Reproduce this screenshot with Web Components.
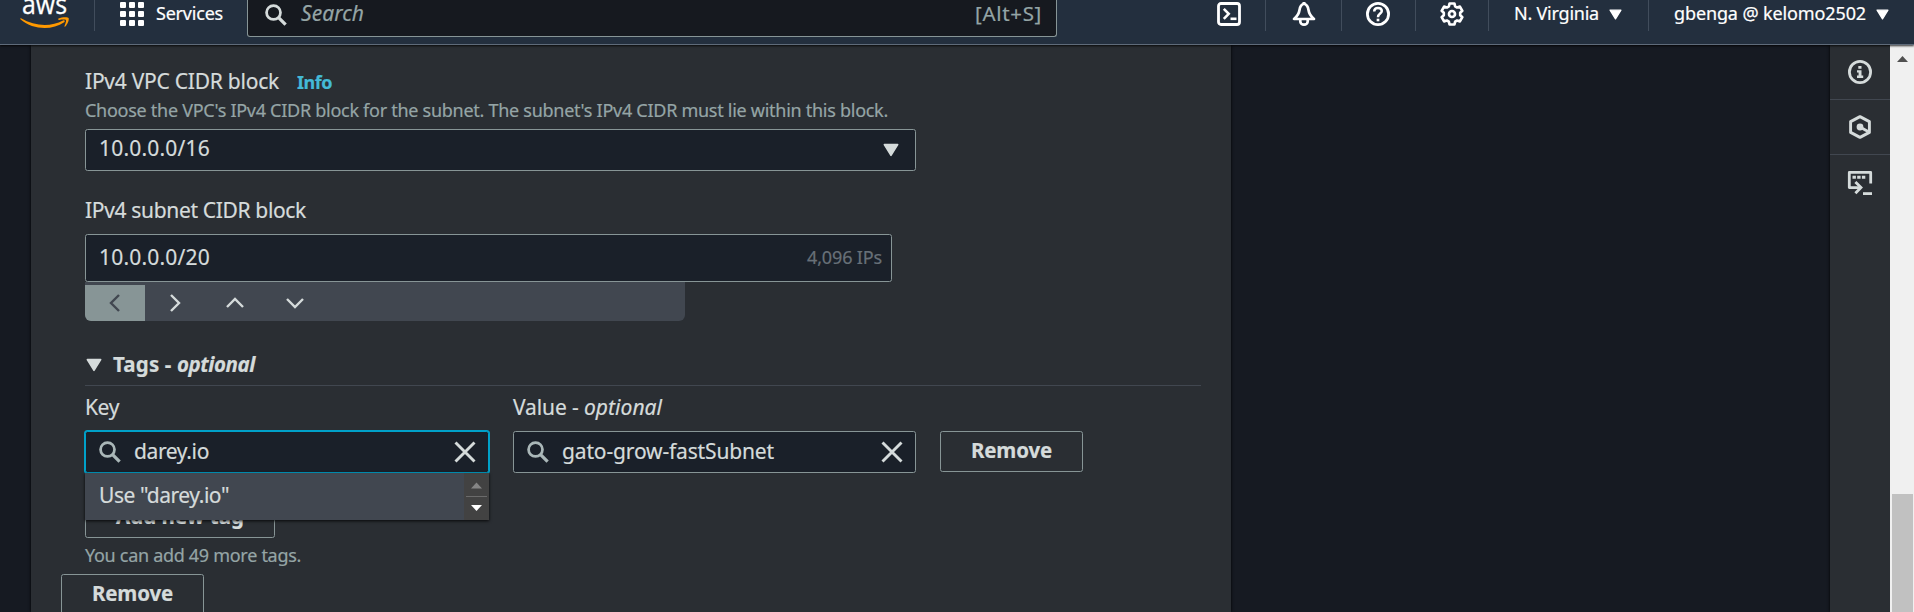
<!DOCTYPE html>
<html lang="en"><head><meta charset="utf-8"><title>Create subnet</title>
<style>
html,body{margin:0;height:100%;overflow:hidden;background:#161a22}
body{font-family:"Noto Sans","Open Sans",sans-serif;color:#d5dbdb;-webkit-text-stroke:.2px}
</style></head><body>
<console-app></console-app>
<script>
const define=(name,html,after)=>customElements.define(name,class extends HTMLElement{
  connectedCallback(){
    if(this.shadowRoot)return;
    this.attachShadow({mode:'open'}).innerHTML=typeof html==='function'?html(this):html;
    if(after)after(this);
  }
});

/* Single-line text tracked to a given width */
define('fit-text','<style>:host{display:block;white-space:pre;flex:none}span{display:inline-block}</style><span><slot></slot></span>',el=>{
  const s=el.shadowRoot.querySelector('span'),w=+el.getAttribute('w'),lh=el.getAttribute('lh')||28;
  el.style.fontSize=el.getAttribute('size')+'px';
  el.style.lineHeight=lh+'px';
  el.style.height=lh+'px';
  const n=el.textContent.length,ls=(w-s.getBoundingClientRect().width)/n;
  s.style.letterSpacing=ls+'px';
  el.style.width=w+'px';
});

/* Six-lobed cog outline */
const cog=Array.from({length:6},(_,i)=>[[-13,10.8],[13,10.8],[22,8.300],[38,8.300]].map(([a,r])=>{
  const t=(i*60+a-90)*Math.PI/180;return (12+r*Math.cos(t)).toFixed(2)+' '+(12+r*Math.sin(t)).toFixed(2);
}).join('L')).join('L');

const icons={
  search:'<circle cx="9.3" cy="9.3" r="7.6" fill="none" stroke="currentColor" stroke-width="3"/><path d="M14.8 14.8L22.500 22.500" stroke="currentColor" stroke-width="3.600"/>',
  close:'<path d="M2.500 2.500L21.500 21.500M21.500 2.500L2.500 21.500" stroke="currentColor" stroke-width="2.900"/>',
  caret:'<path d="M2 4H22L12 20Z" fill="currentColor" stroke="currentColor" stroke-width="2.400" stroke-linejoin="round"/>',
  left:'<path d="M16 4L8 12L16 20" fill="none" stroke="currentColor" stroke-width="2.400"/>',
  right:'<path d="M8 4L16 12L8 20" fill="none" stroke="currentColor" stroke-width="2.400"/>',
  up:'<path d="M4 16L12 8L20 16" fill="none" stroke="currentColor" stroke-width="2.400"/>',
  down:'<path d="M4 8L12 16L20 8" fill="none" stroke="currentColor" stroke-width="2.400"/>',
  grid:'<g fill="currentColor">'+[0,9,18].map(y=>[0,9,18].map(x=>`<rect x="${x}" y="${y}" width="6" height="6" rx="1"/>`).join('')).join('')+'</g>',
  shell:'<rect x="1.500" y="1.500" width="21" height="21" rx="2.500" fill="none" stroke="currentColor" stroke-width="2.800"/><path d="M6.800 6.800L11.700 11.800L6.800 16.800" fill="none" stroke="currentColor" stroke-width="2.600"/><path d="M13.500 16.800H19.500" stroke="currentColor" stroke-width="2.600"/>',
  bell:'<path d="M12 1.800C9 2.600 7.900 4.800 7.500 8C6.900 12.500 5 14.500 2 17H22C19 14.500 17.100 12.500 16.500 8C16.100 4.800 15 2.600 12 1.800Z" fill="none" stroke="currentColor" stroke-width="2.700" stroke-linejoin="round"/><path d="M8.300 18V19.400A3.700 3.300 0 0 0 15.700 19.400V18" fill="none" stroke="currentColor" stroke-width="2.700"/><path d="M12 0V3" stroke="currentColor" stroke-width="3"/>',
  help:'<circle cx="12" cy="12" r="10.600" fill="none" stroke="currentColor" stroke-width="2.800"/><path d="M8.200 9.600C8.200 7.200 9.700 6 12 6C14.300 6 15.800 7.300 15.800 9C15.800 11.600 12 11.600 12 15.200" fill="none" stroke="currentColor" stroke-width="2.500"/><path d="M12 16.700V19.300" stroke="currentColor" stroke-width="2.700"/>',
  gear:`<path d="M${cog}Z" fill="none" stroke="currentColor" stroke-width="2.700" stroke-linejoin="round"/><circle cx="12" cy="12" r="3" fill="none" stroke="currentColor" stroke-width="2.700"/>`,
  info:'<circle cx="12" cy="12" r="10.600" fill="none" stroke="currentColor" stroke-width="2.800"/><path d="M10.300 6H13.500V8.800H10.300ZM9 10.300H13.500V15.600H15.200V17.900H9V15.600H10.600V12.400H9Z" fill="currentColor"/>',
  hex:'<path d="M12 1.600L21.400 6.600V17.400L12 22.400L2.600 17.400V6.600Z" fill="none" stroke="currentColor" stroke-width="2.900" stroke-linejoin="round"/><circle cx="12" cy="12" r="3.400" fill="currentColor"/><path d="M12 12L20 16.400" stroke="currentColor" stroke-width="2.800"/>',
  session:'<path d="M22.700 12.500V1.400H1.300V16.600H12" fill="none" stroke="currentColor" stroke-width="2.800" stroke-linejoin="round"/><path d="M7.400 11L13 16.600L7.400 22.200" fill="none" stroke="currentColor" stroke-width="2.800"/><path d="M15 22.600H24" stroke="currentColor" stroke-width="2.800"/><path d="M4.500 6.200H17.500" stroke="currentColor" stroke-width="3" stroke-dasharray="3.400 1.300"/>'
};
define('ui-icon',el=>{const s=el.getAttribute('size')||24;return `<style>:host{display:block;flex:none;width:${s}px;height:${s}px}svg{display:block;overflow:visible}</style><svg width="${s}" height="${s}" viewBox="0 0 24 24">${icons[el.getAttribute('name')]}</svg>`});

define('aws-logo',`<style>:host{display:block;width:50px;height:31px}svg{display:block;overflow:hidden}text{font:500 27px "Open Sans","Noto Sans",sans-serif;fill:#fff;stroke:#fff;stroke-width:.3px}</style>
<svg width="50" height="31" viewBox="0 0 50 31"><text x="2" y="14.300" textLength="45" lengthAdjust="spacingAndGlyphs">aws</text>
<path d="M1 18.300C15 26.600 31 27 43 20.600C44.500 19.800 45.500 21.200 44.200 22.200C32 30.600 13 30 .7 19.500C0 18.700 .3 18 1 18.300Z" fill="#f90"/><path d="M38.500 18.500C42 17 48 16.700 48.700 18.200C49.200 20 47.500 24.500 45.300 26.400C44.600 26.900 44.200 26.600 44.500 25.900C45.300 24 46.500 20.700 45.900 20C45.200 19.200 41.400 19.600 39.200 19.900C38.200 20 37.700 18.900 38.500 18.500Z" fill="#f90"/></svg>`);

define('nav-cell',el=>`<style>:host{display:flex;flex:none;box-sizing:border-box;width:${el.getAttribute('w')}px;height:31px;border-left:1px solid #414d5c;padding-left:${el.getAttribute('p')}px}</style><slot></slot>`);

define('top-nav',`<style>
:host{display:flex;height:44px;background:#232f3e;border-bottom:1px solid #5f6b7a;color:#fff;box-sizing:content-box}
aws-logo{margin:0 24px 0 20px}
.services{gap:12px}.services ui-icon{margin-top:2px}
.search{box-sizing:border-box;width:810px;height:37px;border:1px solid #879596;border-top:0;border-radius:0 0 3px 3px;background:#16191f;display:flex;color:#95a5a6}
.search ui-icon{margin:4px 14px 0 17px;color:#d5dbdb}
.search .q{font-style:italic}.search .k{margin-left:auto;margin-right:14px}
.right{display:flex;margin-left:160px}.right ui-icon{margin-top:2px}
fit-text{margin-top:-1px}
.caret{margin:7.500px 0 0 9.500px!important}
</style>
<aws-logo></aws-logo>
<nav-cell class="services" w="153" p="25"><ui-icon name="grid"></ui-icon><fit-text size="18" w="67">Services</fit-text></nav-cell>
<div class="search"><ui-icon name="search" size="22"></ui-icon><fit-text class="q" size="21" w="63">Search</fit-text><fit-text class="k" size="20.500" w="67">[Alt+S]</fit-text></div>
<div class="right"><ui-icon name="shell" style="margin-right:24px"></ui-icon>
<nav-cell w="76" p="26"><ui-icon name="bell"></ui-icon></nav-cell>
<nav-cell w="74" p="24"><ui-icon name="help"></ui-icon></nav-cell>
<nav-cell w="73" p="24"><ui-icon name="gear"></ui-icon></nav-cell>
<nav-cell w="160" p="25"><fit-text size="18" w="85">N. Virginia</fit-text><ui-icon class="caret" name="caret" size="13"></ui-icon></nav-cell>
<nav-cell w="255" p="25"><fit-text size="18" w="192">gbenga @ kelomo2502</fit-text><ui-icon class="caret" name="caret" size="13"></ui-icon></nav-cell>
</div>`);

define('text-field',el=>`<style>
:host{display:flex;box-sizing:border-box;border:1px solid #879596;border-radius:2.500px;background:#1a2029;align-items:center;padding:0 11px 0 13px;color:#d5dbdb}
:host([focused]){border-color:#00a1c9;box-shadow:0 0 0 1px #00a1c9}
.s{color:#aab7b8;margin-right:13px}.end{margin-left:auto}
</style>${el.hasAttribute('search')?'<ui-icon class="s" name="search" size="22"></ui-icon>':''}<slot></slot><div class="end"><slot name="end"></slot></div>`);

define('ui-button',`<style>:host{display:flex;box-sizing:border-box;border:1px solid #879596;border-radius:2.500px;height:41px;justify-content:center;align-items:center;font-weight:700;background:#2a2e33}</style><slot></slot>`);

define('cidr-stepper',`<style>:host{display:flex;width:600px;height:39px;background:#414750;border-radius:0 0 6px 6px;overflow:hidden}
div{width:60px;height:36px;margin-top:3px;display:flex;align-items:center;justify-content:center}.off{background:#879596;color:#414750}ui-icon{margin-bottom:1px}</style>
<div class="off"><ui-icon name="left" size="24"></ui-icon></div><div><ui-icon name="right" size="24"></ui-icon></div><div><ui-icon name="up" size="24"></ui-icon></div><div><ui-icon name="down" size="24"></ui-icon></div>`);

define('suggest-menu',`<style>:host{position:absolute;top:42px;left:0;width:404px;height:47px;background:#414750;display:flex;align-items:center;box-shadow:0 1px 3px rgba(0,0,0,.85);box-sizing:border-box;padding-left:14px;z-index:2}
.bar{margin-left:auto;width:25px;height:47px;background:#424242;display:flex;flex-direction:column;align-items:center}
svg{display:block}</style><slot></slot><div class="bar"><svg width="25" height="47"><path d="M7 15.500L12.500 9.500L18 15.500Z" fill="#858585"/><path d="M2 23.500H23" stroke="#6b6b6b"/><path d="M7 32H18L12.500 38Z" fill="#fff"/></svg></div>`);

define('subnet-form',`<style>
:host{display:block;box-sizing:border-box;width:1200px;height:567px;background:#2a2e33;padding:22px 30px 0 54px;overflow:hidden;box-shadow:0 0 3px #000;color:#d5dbdb}
.row{display:flex}.desc{color:#95a5a6}
.lab{align-items:baseline;gap:18px;height:28px}
b{font-weight:700;color:#44b9d6}
.tags{height:36px;border-bottom:1px solid #414750;box-sizing:border-box;font-weight:700;margin-top:29px;align-items:flex-start}
.tags ui-icon{margin:7px 11px 0 1px}
.grid{display:grid;grid-template-columns:404px 403px 143px;column-gap:24px;margin-top:7px}
.field{position:relative;margin-top:10px}
.optional{font-style:italic}
</style>
<div class="row lab"><fit-text size="21" w="194">IPv4 VPC CIDR block</fit-text><b><fit-text size="18" w="35">Info</fit-text></b></div>
<fit-text class="desc" size="18" w="803" lh="24" style="margin-top:3px">Choose the VPC's IPv4 CIDR block for the subnet. The subnet's IPv4 CIDR must lie within this block.</fit-text>
<text-field style="width:831px;height:42px;margin-top:7px;padding-right:16px"><fit-text size="21" w="111" style="margin-top:-4px">10.0.0.0/16</fit-text><ui-icon slot="end" name="caret" size="16"></ui-icon></text-field>
<fit-text size="21" w="221" style="margin-top:25px">IPv4 subnet CIDR block</fit-text>
<text-field style="width:807px;height:48px;margin-top:10px;padding-right:9px"><fit-text size="21" w="111" style="margin-top:-2px">10.0.0.0/20</fit-text><fit-text slot="end" size="18" w="75" style="color:#687078;margin-top:-2px">4,096 IPs</fit-text></text-field>
<cidr-stepper></cidr-stepper>
<div class="row tags"><ui-icon name="caret" size="16"></ui-icon><fit-text size="20.500" w="64">Tags - </fit-text><fit-text class="optional" size="20.500" w="78">optional</fit-text></div>
<div class="grid">
<div><fit-text size="21" w="34">Key</fit-text><div class="field"><text-field search focused style="height:42px"><fit-text size="21" w="75" style="margin-top:-2px">darey.io</fit-text><ui-icon slot="end" name="close"></ui-icon></text-field><suggest-menu><fit-text size="21" w="130" style="margin-top:-3px">Use "darey.io"</fit-text></suggest-menu></div></div>
<div><div class="row"><fit-text size="21" w="71">Value - </fit-text><fit-text class="optional" size="21" w="78">optional</fit-text></div><text-field search style="height:42px;margin-top:10px"><fit-text size="21" w="212" style="margin-top:-2px">gato-grow-fastSubnet</fit-text><ui-icon slot="end" name="close"></ui-icon></text-field></div>
<ui-button style="margin-top:38px"><fit-text size="20.500" w="81" style="margin-top:-3px">Remove</fit-text></ui-button>
</div>
<ui-button style="width:190px;margin-top:24px"><fit-text size="20.500" w="128" style="margin-top:-3px">Add new tag</fit-text></ui-button>
<fit-text class="desc" size="18" w="216" lh="24" style="margin-top:5px">You can add 49 more tags.</fit-text>
<ui-button style="width:143px;margin:7px 0 0 -24px"><fit-text size="20.500" w="81" style="margin-top:-3px">Remove</fit-text></ui-button>
`);

define('tool-rail',`<style>:host{display:flex;flex-direction:column;width:60px;background:#2a2e33;box-shadow:0 0 3px #000;color:#d5dbdb}
div{height:55px;box-sizing:border-box;border-bottom:1px solid #414750;display:flex;align-items:center;justify-content:center}div:first-child{height:56px;padding-top:1px}div:last-child{border:0}</style>
<div><ui-icon name="info"></ui-icon></div><div><ui-icon name="hex"></ui-icon></div><div><ui-icon name="session"></ui-icon></div>`);

define('scroll-bar',`<style>:host{display:flex;flex-direction:column;width:24px;background:#f0f0f0}svg{display:block}i{display:block;width:21px;margin:432px 0 0 2px;flex:1;background:#c1c1c1}</style><svg width="24" height="17"><path d="M7 17L12.500 11L18 17Z" fill="#505050"/></svg><i></i>`);

define('console-app',`<style>:host{display:flex;flex-direction:column;width:1914px;height:612px;overflow:hidden}
main{display:flex;flex:1;padding-left:31px;min-height:0}tool-rail{margin-left:auto}
top-nav{position:relative;z-index:1;box-shadow:0 1px 2px rgba(0,0,0,.8)}</style>
<top-nav></top-nav><main><subnet-form></subnet-form><tool-rail></tool-rail><scroll-bar></scroll-bar></main>`);
</script></body></html>
